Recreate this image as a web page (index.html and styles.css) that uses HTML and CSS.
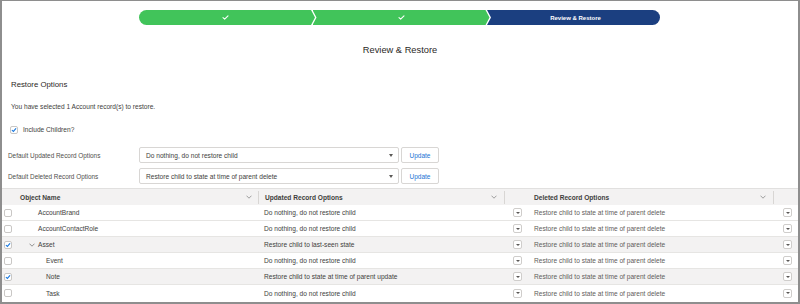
FILE: index.html
```html
<!DOCTYPE html>
<html lang="en">
<head>
<meta charset="utf-8">
<title>Review &amp; Restore</title>
<link rel="stylesheet" href="styles.css">
</head>
<body>
<div class="frame">
  <div class="path">
    <div class="step done first">
      <svg class="tick" viewBox="0 0 8 6" width="7" height="5"><path d="M1 3.2 L3 5 L7 1" fill="none" stroke="#fff" stroke-width="1.3" stroke-linecap="round" stroke-linejoin="round"/></svg>
    </div>
    <div class="step done mid">
      <svg class="tick" viewBox="0 0 8 6" width="7" height="5"><path d="M1 3.2 L3 5 L7 1" fill="none" stroke="#fff" stroke-width="1.3" stroke-linecap="round" stroke-linejoin="round"/></svg>
    </div>
    <div class="step current last">Review &amp; Restore</div>
  </div>

  <h1 class="title">Review &amp; Restore</h1>

  <section class="options">
    <h2 class="opt-heading">Restore Options</h2>
    <p class="opt-text">You have selected 1 Account record(s) to restore.</p>
    <div class="include">
      <span class="cb checked"><svg viewBox="0 0 8 8" width="8" height="8"><path d="M2.2 4.3 L3.4 5.4 L5.8 2.6" fill="none" stroke="#1b7ae0" stroke-width="1.1" stroke-linecap="round"/></svg></span>
      <span>Include Children?</span>
    </div>
    <div class="defaults">
      <span class="d-label">Default Updated Record Options</span>
      <div class="select"><span>Do nothing, do not restore child</span><span class="tri"></span></div>
      <button class="btn">Update</button>
      <span class="d-label">Default Deleted Record Options</span>
      <div class="select"><span>Restore child to state at time of parent delete</span><span class="tri"></span></div>
      <button class="btn">Update</button>
    </div>
  </section>

  <div class="table">
    <div class="row head">
      <div class="hc c1"><span>Object Name</span><svg class="chev" viewBox="0 0 6 4" width="6" height="4"><path d="M0.5 0.7 L3 3.2 L5.5 0.7" fill="none" stroke="#888" stroke-width="0.8"/></svg></div>
      <div class="hc c2"><span>Updated Record Options</span><svg class="chev" viewBox="0 0 6 4" width="6" height="4"><path d="M0.5 0.7 L3 3.2 L5.5 0.7" fill="none" stroke="#888" stroke-width="0.8"/></svg></div>
      <div class="hc c34"><span>Deleted Record Options</span><svg class="chev" viewBox="0 0 6 4" width="6" height="4"><path d="M0.5 0.7 L3 3.2 L5.5 0.7" fill="none" stroke="#888" stroke-width="0.8"/></svg></div>
      <div class="hc c5"></div>
    </div>

    <div class="row">
      <div class="cell name"><span class="cb"></span><span class="nm lvl0">AccountBrand</span></div>
      <div class="cell upd">Do nothing, do not restore child</div>
      <div class="cell dd"><span class="mini"></span></div>
      <div class="cell del">Restore child to state at time of parent delete</div>
      <div class="cell dd last"><span class="mini"></span></div>
    </div>
    <div class="row">
      <div class="cell name"><span class="cb"></span><span class="nm lvl0">AccountContactRole</span></div>
      <div class="cell upd">Do nothing, do not restore child</div>
      <div class="cell dd"><span class="mini"></span></div>
      <div class="cell del">Restore child to state at time of parent delete</div>
      <div class="cell dd last"><span class="mini"></span></div>
    </div>
    <div class="row sel">
      <div class="cell name"><span class="cb checked"><svg viewBox="0 0 8 8" width="8" height="8"><path d="M2.2 4.3 L3.4 5.4 L5.8 2.6" fill="none" stroke="#1b7ae0" stroke-width="1.1" stroke-linecap="round"/></svg></span><svg class="tree" viewBox="0 0 6 4" width="6" height="4"><path d="M0.5 0.7 L3 3.2 L5.5 0.7" fill="none" stroke="#777" stroke-width="0.8"/></svg><span class="nm">Asset</span></div>
      <div class="cell upd">Restore child to last-seen state</div>
      <div class="cell dd"><span class="mini"></span></div>
      <div class="cell del">Restore child to state at time of parent delete</div>
      <div class="cell dd last"><span class="mini"></span></div>
    </div>
    <div class="row">
      <div class="cell name"><span class="cb"></span><span class="nm lvl1">Event</span></div>
      <div class="cell upd">Do nothing, do not restore child</div>
      <div class="cell dd"><span class="mini"></span></div>
      <div class="cell del">Restore child to state at time of parent delete</div>
      <div class="cell dd last"><span class="mini"></span></div>
    </div>
    <div class="row sel">
      <div class="cell name"><span class="cb checked"><svg viewBox="0 0 8 8" width="8" height="8"><path d="M2.2 4.3 L3.4 5.4 L5.8 2.6" fill="none" stroke="#1b7ae0" stroke-width="1.1" stroke-linecap="round"/></svg></span><span class="nm lvl1">Note</span></div>
      <div class="cell upd">Restore child to state at time of parent update</div>
      <div class="cell dd"><span class="mini"></span></div>
      <div class="cell del">Restore child to state at time of parent delete</div>
      <div class="cell dd last"><span class="mini"></span></div>
    </div>
    <div class="row">
      <div class="cell name"><span class="cb"></span><span class="nm lvl1">Task</span></div>
      <div class="cell upd">Do nothing, do not restore child</div>
      <div class="cell dd"><span class="mini"></span></div>
      <div class="cell del">Restore child to state at time of parent delete</div>
      <div class="cell dd last"><span class="mini"></span></div>
    </div>
  </div>
</div>
</body>
</html>
```

FILE: styles.css
```css
* { box-sizing: border-box; }
html, body { margin: 0; padding: 0; background: #fff; }
body {
  font-family: "Liberation Sans", Arial, sans-serif;
  font-size: 6.6px;
  color: #3e3e3c;
}
.frame {
  width: 800px;
  height: 304px;
  border: 2px solid #8e8e8e;
  border-top-width: 1px;
  overflow: hidden;
}

/* path */
.path {
  margin: 9px 0 0 137px;
  width: 521px;
  height: 15px;
  display: flex;
  border-radius: 8px;
  overflow: hidden;
}
.step {
  height: 15px;
  display: flex;
  align-items: center;
  justify-content: center;
  color: #fff;
  font-weight: bold;
  font-size: 6px;
}
.step.done { background: #41c45a; }
.step.current { background: #1b3f80; }
.step.first {
  width: 176px;
  clip-path: polygon(0 0, calc(100% - 4px) 0, 100% 50%, calc(100% - 4px) 100%, 0 100%);
  padding-right: 4px;
}
.step.mid {
  width: 177px;
  margin-left: -2.5px;
  clip-path: polygon(0 0, calc(100% - 4px) 0, 100% 50%, calc(100% - 4px) 100%, 0 100%, 4px 50%);
}
.step.last {
  flex: 1;
  margin-left: -2.5px;
  clip-path: polygon(0 0, 100% 0, 100% 100%, 0 100%, 4px 50%);
  padding-left: 4px;
}
.tick { display: block; }

.title {
  margin: 19px 0 0;
  height: 12px;
  line-height: 12px;
  font-size: 9.3px;
  font-weight: normal;
  text-align: center;
  color: #2b2826;
}

/* options */
.options { padding-left: 9px; }
.opt-heading {
  margin: 24px 0 0;
  font-size: 7.8px;
  line-height: 10px;
  font-weight: normal;
  color: #2b2826;
}
.opt-text {
  margin: 12px 0 0;
  line-height: 9px;
}
.include {
  margin-top: 14px;
  height: 9px;
  display: flex;
  align-items: center;
  gap: 5px;
}
.cb {
  width: 8px;
  height: 8px;
  border: 1px solid #c9c7c5;
  border-radius: 2px;
  background: #fff;
  display: inline-flex;
  align-items: center;
  justify-content: center;
  flex: none;
  position: relative;
}
.cb svg { position: absolute; left: -1px; top: -1px; }
.include .cb { margin-left: -1px; }

.defaults {
  margin: 13px 0 0 -9px;
  display: grid;
  grid-template-columns: 135px 260px 38px;
  grid-auto-rows: 16px;
  row-gap: 5px;
  column-gap: 2px;
  align-items: center;
}
.d-label {
  padding-left: 6px;
  font-size: 6.4px;
  color: #514f4d;
}
.select {
  height: 16px;
  border: 1px solid #d8d6d4;
  border-radius: 2px;
  display: flex;
  align-items: center;
  justify-content: space-between;
  padding: 0 5px 0 6px;
  color: #3e3e3c;
}
.tri {
  width: 0;
  height: 0;
  border-left: 2.5px solid transparent;
  border-right: 2.5px solid transparent;
  border-top: 3px solid #5a5856;
}
.btn {
  height: 16px;
  font: inherit;
  font-size: 6.5px;
  color: #1a73d4;
  background: #fff;
  border: 1px solid #d8d6d4;
  border-radius: 2px;
  padding: 0;
}

/* table */
.table { margin-top: 4px; }
.row {
  display: grid;
  grid-template-columns: 257px 246px 23px 246px 1fr;
  height: 16px;
  border-bottom: 1px solid #e6e5e3;
  align-items: center;
}
.row:last-child { border-bottom: none; }
.row.sel { background: #f3f2f2; }
.row.head {
  height: 17px;
  background: #f3f2f2;
  border-top: 1px solid #e1e0df;
  border-bottom: none;
  grid-template-columns: 257px 246px 269px 1fr;
  font-weight: bold;
  color: #3e3e3c;
}
.hc {
  height: 13px;
  display: flex;
  align-items: center;
  justify-content: space-between;
  border-right: 1px solid #d8d6d4;
}
.hc.c1 { padding: 0 6px 0 18px; }
.hc.c2 { padding: 0 7px 0 6px; }
.hc.c34 { padding: 0 7px 0 29px; }
.hc.c5 { border-right: none; }
.chev { display: block; }

.cell {
  height: 100%;
  display: flex;
  align-items: center;
  white-space: nowrap;
}
.cell.name { padding-left: 2px; }
.nm.lvl0 { margin-left: 26px; }
.nm.lvl1 { margin-left: 34px; }
.tree { margin: 0 3px 0 17px; display: block; }
.cell.upd { padding-left: 5px; color: #3e3e3c; }
.cell.del { padding-left: 6px; color: #5f5d5b; }
.cell.dd { padding-left: 8px; }
.cell.dd.last { padding-left: 9px; }
.mini {
  width: 9px;
  height: 9px;
  border: 1px solid #cfcdcb;
  border-radius: 2px;
  background: #fff;
  display: inline-flex;
  align-items: center;
  justify-content: center;
}
.mini::after {
  content: "";
  border-left: 2px solid transparent;
  border-right: 2px solid transparent;
  border-top: 2.5px solid #5a5856;
}
```
